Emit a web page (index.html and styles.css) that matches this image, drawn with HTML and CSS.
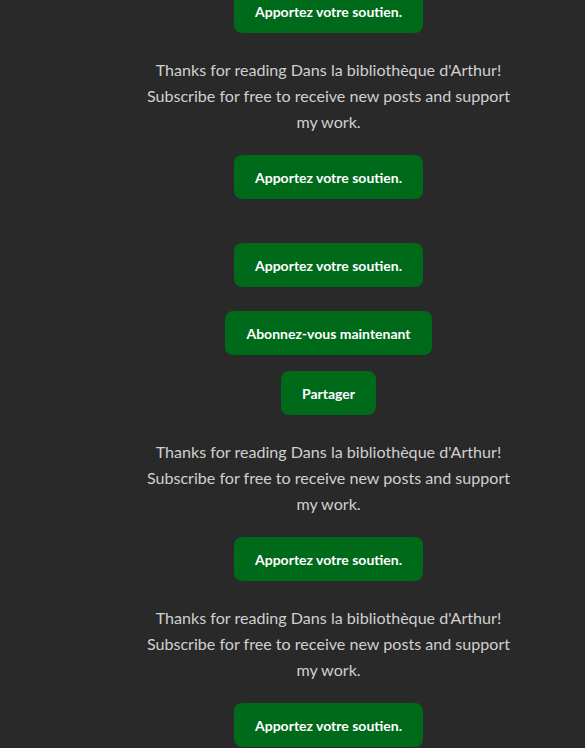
FILE: index.html
```html
<!DOCTYPE html>
<html lang="fr">
<head>
<meta charset="utf-8">
<title>Dans la bibliothèque d'Arthur</title>
<link rel="stylesheet" href="styles.css">
</head>
<body>
<main class="post">
  <div class="btn-row first"><a class="btn">Apportez votre soutien.</a></div>
  <p class="cta-text">Thanks for reading Dans la bibliothèque d'Arthur! Subscribe for free to receive new posts and support my work.</p>
  <div class="btn-row"><a class="btn">Apportez votre soutien.</a></div>
  <div class="btn-row spaced"><a class="btn">Apportez votre soutien.</a></div>
  <div class="btn-row"><a class="btn">Abonnez-vous maintenant</a></div>
  <div class="btn-row tight"><a class="btn">Partager</a></div>
  <p class="cta-text">Thanks for reading Dans la bibliothèque d'Arthur! Subscribe for free to receive new posts and support my work.</p>
  <div class="btn-row"><a class="btn">Apportez votre soutien.</a></div>
  <p class="cta-text">Thanks for reading Dans la bibliothèque d'Arthur! Subscribe for free to receive new posts and support my work.</p>
  <div class="btn-row"><a class="btn">Apportez votre soutien.</a></div>
</main>
</body>
</html>
```
FILE: styles.css
```css
html, body {
  margin: 0;
  padding: 0;
  background: #292929;
}
body {
  font-family: "Lato", "Noto Sans", sans-serif;
  overflow: hidden;
}
.post {
  padding-left: 72px;
  display: flex;
  flex-direction: column;
  align-items: center;
  margin-top: -11px;
}
.btn-row {
  display: flex;
  justify-content: center;
  margin-top: 20px;
}
.btn-row.first { margin-top: 0; }
.btn {
  display: inline-flex;
  align-items: center;
  justify-content: center;
  height: 44px;
  padding: 0 21px;
  box-sizing: border-box;
  background: #006a1b;
  color: #ffffff;
  border-radius: 8px;
  font-size: 14px;
  font-weight: 700;
  white-space: nowrap;
}
.btn-row + .btn-row { margin-top: 24px; }
.btn-row + .btn-row.spaced { margin-top: 44px; }
.btn-row + .btn-row.tight { margin-top: 16px; }
.cta-text {
  margin: 24px 0 0;
  width: 372px;
  text-align: center;
  color: #d0d0d0;
  font-size: 16.1px;
  line-height: 26px;
}
```
